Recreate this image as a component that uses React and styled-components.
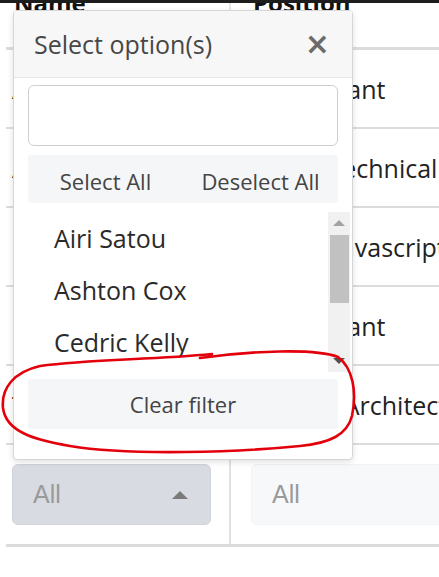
import React from 'react';
import styled, { createGlobalStyle } from 'styled-components';

const GlobalStyle = createGlobalStyle`
  html, body {
    margin: 0;
    padding: 0;
    background: #fff;
  }
  body {
    font-family: "Open Sans", "Noto Sans", sans-serif;
    color: #222;
  }
`;

const Page = styled.div`
  position: relative;
  width: 439px;
  height: 577px;
  overflow: hidden;
  background: #fff;
`;

const TopBar = styled.div`
  height: 3px;
  background: #1d1d1d;
  position: relative;
  z-index: 2;
`;

const Viewport = styled.div`
  height: 574px;
  overflow: hidden;
`;

const Table = styled.div`
  margin-top: -33px;
  margin-left: 6px;
  width: 470px;
`;

const Row = styled.div`
  display: grid;
  grid-template-columns: 225px 1fr;
  height: ${(p) => p.$h}px;
  border-bottom: ${(p) => p.$border}px solid #dcdcde;
  box-sizing: border-box;
`;

const HeadCell = styled.div`
  display: flex;
  align-items: flex-start;
  padding: 16px 0 0 ${(p) => p.$pad}px;
  font-size: 24px;
  font-weight: 700;
  color: #111;
  border-right: ${(p) => (p.$divider ? '2px solid #e6e6e6' : 'none')};
`;

const SortMark = styled.div`
  margin-left: auto;
  margin-top: 30px;
  width: 18px;
  height: 14px;
  border-left: 1px solid #e0e0e0;
  border-right: 1px solid #e0e0e0;
  margin-right: 15px;
  color: #ccc;
  font-size: 10px;
  line-height: 10px;
  text-align: center;
  font-weight: 400;
`;

const Cell = styled.div`
  display: flex;
  align-items: center;
  padding-left: ${(p) => p.$pad}px;
  font-size: 25px;
  color: #222;
  white-space: nowrap;
  overflow: hidden;
`;

const FilterCell = styled.div`
  display: flex;
  align-items: center;
  padding-left: ${(p) => p.$pad}px;
  border-right: ${(p) => (p.$divider ? '2px solid #e0e0e0' : 'none')};
`;

const FilterBox = styled.div`
  width: ${(p) => p.$w}px;
  height: 61px;
  box-sizing: border-box;
  border-radius: 6px;
  background: ${(p) => (p.$active ? '#d8dce2' : '#f7f8fa')};
  border: 1px solid ${(p) => (p.$active ? '#cfd3da' : '#f1f2f4')};
  display: flex;
  align-items: center;
  padding: 0 20px;
  font-family: "Liberation Sans", Arial, sans-serif;
  font-size: 25px;
  color: #9a9a9a;
`;

const Caret = styled.span`
  margin-left: auto;
  width: 0;
  height: 0;
  border-left: 8px solid transparent;
  border-right: 8px solid transparent;
  border-bottom: 8px solid #7a7a7a;
  margin-right: 2px;
`;

const Popup = styled.div`
  position: absolute;
  left: 13px;
  top: 10px;
  width: 340px;
  height: 450px;
  box-sizing: border-box;
  background: #fff;
  border: 1px solid #d6d6d6;
  border-radius: 4px;
  box-shadow: 0 2px 6px rgba(0, 0, 0, 0.12);
  z-index: 3;
  display: flex;
  flex-direction: column;
`;

const PopHeader = styled.div`
  height: 66px;
  flex: none;
  background: #f7f7f7;
  border-bottom: 1px solid #e6e6e6;
  display: flex;
  align-items: center;
  padding: 0 22px 0 20px;
  font-size: 25px;
  color: #474747;
`;

const CloseBtn = styled.span`
  margin-left: auto;
  font-size: 30px;
  font-weight: 700;
  color: #6b6b6b;
  line-height: 1;
  font-family: "DejaVu Sans", sans-serif;
`;

const PopBody = styled.div`
  padding: 7px 14px 30px 14px;
  display: flex;
  flex-direction: column;
`;

const Search = styled.div`
  height: 61px;
  box-sizing: border-box;
  border: 1px solid #cfcfcf;
  border-radius: 6px;
  background: #fff;
`;

const ButtonBar = styled.div`
  margin-top: 9px;
  height: 48px;
  display: grid;
  grid-template-columns: 1fr 1fr;
  background: #f5f6f8;
  border-radius: 3px;
`;

const SoftButton = styled.div`
  display: flex;
  align-items: center;
  justify-content: center;
  font-size: 22px;
  color: #444;
  padding-top: 4px;
`;

const List = styled.div`
  margin-top: 9px;
  margin-right: -12px;
  height: 160px;
  display: flex;
`;

const Items = styled.div`
  flex: 1;
  display: flex;
  flex-direction: column;
`;

const Item = styled.div`
  height: 52px;
  display: flex;
  align-items: center;
  padding-left: 26px;
  font-size: 25px;
  color: #2a2a2a;
`;

const ScrollTrack = styled.div`
  width: 22px;
  background: #f1f1f1;
  display: flex;
  flex-direction: column;
  align-items: center;
`;

const ScrollArrow = styled.div`
  height: 22px;
  width: 100%;
  display: flex;
  align-items: center;
  justify-content: center;
  &::after {
    content: '';
    width: 0;
    height: 0;
    border-left: 6px solid transparent;
    border-right: 6px solid transparent;
    ${(p) =>
      p.$down
        ? 'border-top: 6px solid #505050;'
        : 'border-bottom: 6px solid #a3a3a3;'}
  }
`;

const Thumb = styled.div`
  width: 19px;
  height: 68px;
  margin-top: 1px;
  background: #c1c1c1;
`;

const ScrollSpace = styled.div`
  flex: 1;
`;

const ClearButton = styled.div`
  margin-top: 7px;
  height: 50px;
  background: #f5f6f8;
  border-radius: 3px;
  display: flex;
  align-items: center;
  justify-content: center;
  font-size: 22px;
  color: #444;
`;

const Annotation = styled.svg`
  position: absolute;
  left: 0;
  top: 0;
  z-index: 4;
  pointer-events: none;
`;

const rows = [
  ['Airi Satou', 'Accountant'],
  ['Ashton Cox', 'Junior Technical Author'],
  ['Cedric Kelly', 'Senior Javascript Developer'],
  ['Cara Stevens', 'Accountant'],
  ['Tiger Nixon', 'System Architect'],
];

export default function App() {
  return (
    <Page>
      <GlobalStyle />
      <TopBar />
      <Viewport>
        <Table>
          <Row $h={80} $border={3}>
            <HeadCell $pad={8} $divider>
              Name
              <SortMark>↓</SortMark>
            </HeadCell>
            <HeadCell $pad={22}>Position</HeadCell>
          </Row>
          {rows.map(([name, pos]) => (
            <Row key={name} $h={79} $border={2}>
              <Cell $pad={6}>{name}</Cell>
              <Cell $pad={22}>{pos}</Cell>
            </Row>
          ))}
          <Row $h={102} $border={3}>
            <FilterCell $pad={6} $divider>
              <FilterBox $w={199} $active>
                All
                <Caret />
              </FilterBox>
            </FilterCell>
            <FilterCell $pad={20}>
              <FilterBox $w={230}>All</FilterBox>
            </FilterCell>
          </Row>
        </Table>
      </Viewport>

      <Popup>
        <PopHeader>
          Select option(s)
          <CloseBtn>×</CloseBtn>
        </PopHeader>
        <PopBody>
          <Search />
          <ButtonBar>
            <SoftButton>Select All</SoftButton>
            <SoftButton>Deselect All</SoftButton>
          </ButtonBar>
          <List>
            <Items>
              <Item>Airi Satou</Item>
              <Item>Ashton Cox</Item>
              <Item>Cedric Kelly</Item>
            </Items>
            <ScrollTrack>
              <ScrollArrow />
              <Thumb />
              <ScrollSpace />
              <ScrollArrow $down />
            </ScrollTrack>
          </List>
          <ClearButton>Clear filter</ClearButton>
        </PopBody>
      </Popup>

      <Annotation width="439" height="577" viewBox="0 0 439 577">
        <path
          d="M 200 358 C 250 351, 315 348, 338 357 C 353 368, 357 392, 352 416 C 347 435, 330 443, 300 446 C 240 452, 130 456, 70 446 C 35 440, 6 432, 3 408 C 1 388, 14 372, 40 366 C 90 359, 150 360, 212 354"
          fill="none"
          stroke="#e3000b"
          strokeWidth="2.6"
          strokeLinecap="round"
        />
      </Annotation>
    </Page>
  );
}
